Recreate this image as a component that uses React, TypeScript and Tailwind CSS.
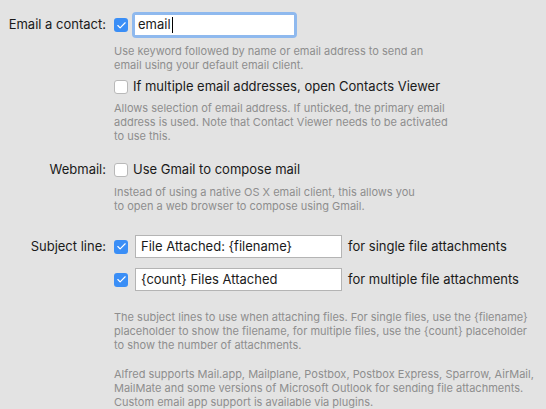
import { Check } from 'lucide-react'

function Box({ checked }: { checked?: boolean }) {
  return checked ? (
    <span className="flex h-[14px] w-[14px] shrink-0 items-center justify-center rounded-[3px] bg-[#3a8ef6]">
      <Check size={11} strokeWidth={2.5} className="text-white" />
    </span>
  ) : (
    <span className="block h-[14px] w-[14px] shrink-0 rounded-[3px] border border-[#b9b9b9] bg-white" />
  )
}

function Help({ children, className = '' }: { children: React.ReactNode; className?: string }) {
  return <p className={`text-[11px] leading-[14px] text-[#8e8e8e] ${className}`}>{children}</p>
}

export default function App() {
  return (
    <div
      className="h-[409px] w-[546px] bg-[#e3e3e3] text-[13px] text-[#1a1a1a]"
      style={{ fontFamily: 'Inter, "Liberation Sans", sans-serif' }}
    >
      <div className="grid grid-cols-[106px_1fr] gap-x-[8px] pt-[12px]">
        {/* Email a contact */}
        <div className="flex h-[26px] items-center justify-end">Email a contact:</div>
        <div>
          <div className="flex h-[26px] items-center gap-[4px]">
            <Box checked />
            <div className="h-[26px] w-[165px] rounded-[4px] bg-[#8fb9ee] p-[3px]">
              <div className="flex h-[20px] items-center bg-white pl-[3px]">
                email<span className="ml-[1px] h-[16px] w-px bg-black" />
              </div>
            </div>
          </div>
          <Help className="mt-[6px]">
            Use keyword followed by name or email address to send an
            <br />
            email using your default email client.
          </Help>
          <div className="mt-[8px] flex h-[14px] items-center gap-[5px]">
            <Box />
            <span>If multiple email addresses, open Contacts Viewer</span>
          </div>
          <Help className="mt-[7px]">
            Allows selection of email address. If unticked, the primary email
            <br />
            address is used. Note that Contact Viewer needs to be activated
            <br />
            to use this.
          </Help>
        </div>

        {/* Webmail */}
        <div className="mt-[20px] flex h-[14px] items-center justify-end">Webmail:</div>
        <div className="mt-[20px]">
          <div className="flex h-[14px] items-center gap-[5px]">
            <Box />
            <span>Use Gmail to compose mail</span>
          </div>
          <Help className="mt-[8px]">
            Instead of using a native OS X email client, this allows you
            <br />
            to open a web browser to compose using Gmail.
          </Help>
        </div>

        {/* Subject line */}
        <div className="mt-[22px] flex h-[23px] items-center justify-end">Subject line:</div>
        <div className="mt-[22px]">
          <div className="flex h-[23px] items-center">
            <Box checked />
            <div className="ml-[7px] flex h-[23px] w-[207px] items-center border border-[#b4b4b4] bg-white pl-[5px]">
              File Attached: {'{filename}'}
            </div>
            <span className="ml-[6px]">for single file attachments</span>
          </div>
          <div className="mt-[10px] flex h-[23px] items-center">
            <Box checked />
            <div className="ml-[7px] flex h-[23px] w-[207px] items-center border border-[#b4b4b4] bg-white pl-[5px]">
              {'{count}'} Files Attached
            </div>
            <span className="ml-[6px]">for multiple file attachments</span>
          </div>
          <Help className="mt-[19px]">
            The subject lines to use when attaching files. For single files, use the {'{filename}'}
            <br />
            placeholder to show the filename, for multiple files, use the {'{count}'} placeholder
            <br />
            to show the number of attachments.
          </Help>
          <Help className="mt-[15px]">
            Alfred supports Mail.app, Mailplane, Postbox, Postbox Express, Sparrow, AirMail,
            <br />
            MailMate and some versions of Microsoft Outlook for sending file attachments.
            <br />
            Custom email app support is available via plugins.
          </Help>
        </div>
      </div>
    </div>
  )
}
